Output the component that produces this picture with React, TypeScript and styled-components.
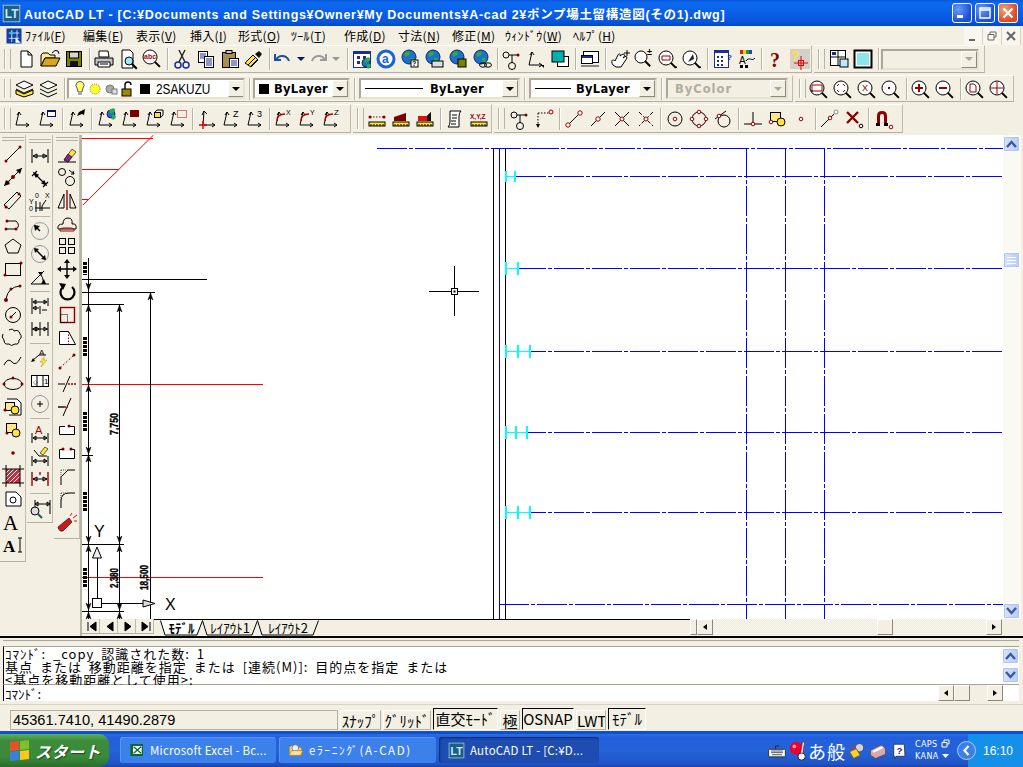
import React from "react";
import styled, { createGlobalStyle } from "styled-components";

const FACE = "#f3efe3";
const UI_FONT = `"Liberation Sans", "Noto Sans CJK JP", sans-serif`;
const CJK_FONT = `"Noto Sans CJK JP", "Liberation Sans", sans-serif`;

const GlobalStyle = createGlobalStyle`
  html, body {
    margin: 0;
    padding: 0;
    background: ${FACE};
  }
`;

/* ---------- icon helpers ---------- */

const dot = (x: number, y: number, r = 1.5) => <circle cx={x} cy={y} r={r} fill="#7a0000" />;
const ln = (d: string, c = "#000", w = 1) => <path d={d} fill="none" stroke={c} strokeWidth={w} />;
const mag = (x: number, y: number, r: number, fill = "none") => (
  <>
    <circle cx={x} cy={y} r={r} fill={fill} stroke="#000" />
    <path d={`M${x + r * 0.7} ${y + r * 0.7}l5 5`} stroke="#000" strokeWidth={2} />
  </>
);
const globe = (x: number, y: number, r = 7) => (
  <>
    <circle cx={x} cy={y} r={r} fill="#1d6fd0" stroke="#102a60" />
    <path d={`M${x - r + 2} ${y - 3}q3 -4 6 -2q0 4 -3 4q-1 3 -3 -2zM${x + 1} ${y + 1}q4 -1 4 2q-2 4 -4 2z`} fill="#2fa84a" />
  </>
);
const axis = () => ln("M8 5L5 18H18M8 5l-2 3M8 5l2 3M18 18l-3-2M18 18l-3 2");
const ruler = (x = 12) => (
  <>
    <rect x={x - 8} y={15} width={16} height={4} fill="#ffe23a" stroke="#000" />
    {ln(`M${x - 6} 17v2M${x - 3} 17v2M${x} 17v2M${x + 3} 17v2M${x + 6} 17v2`)}
  </>
);
const dimBar = (y = 16) => ln(`M4 ${y - 5}v10M20 ${y - 5}v10M5 ${y}h14M5 ${y}l3-2v4zM19 ${y}l-3-2v4z`);
const txt = (x: number, y: number, s: string, c = "#000", size = 7, weight = 400, family = "Liberation Sans, sans-serif") => (
  <text x={x} y={y} fontSize={size} fontFamily={family} fill={c} fontWeight={weight}>
    {s}
  </text>
);

const icons: Record<string, React.ReactNode> = {
  new: <path d="M7 4h7l4 4v12H7zM14 4v4h4" fill="#fff" stroke="#000" />,
  open: (
    <>
      <path d="M3 19V8l2-2h5l2 2h5v3H7z" fill="#ffe887" stroke="#000" />
      <path d="M3 19l4-8h15l-4 8z" fill="#d8a520" stroke="#000" />
      {ln("M14 6q3-4 6-2M20 4l1 3", "#000")}
    </>
  ),
  save: (
    <>
      <rect x="4.500" y="4.500" width="15" height="15" fill="#808000" stroke="#000" />
      <rect x="7.500" y="5" width="9" height="6" fill="#d8d8c0" stroke="#000" />
      <rect x="8" y="14" width="8" height="5" fill="#111" />
    </>
  ),
  print: (
    <>
      <path d="M7 4h9l1 6H7z" fill="#fff" stroke="#000" />
      <path d="M3 11h18v7H3z" fill="#c4c4c4" stroke="#000" />
      <path d="M6 15h12v5H6z" fill="#fff" stroke="#000" />
      {ln("M8 17h8")}
    </>
  ),
  preview: (
    <>
      <path d="M6 3h8l3 3v15H6z" fill="#fff" stroke="#000" />
      {mag(13, 14, 4, "#9fe8f0")}
    </>
  ),
  spell: (
    <>
      {mag(10, 10, 7, "#fff")}
      {txt(4, 12, "abc", "#b00000", 7, 700)}
    </>
  ),
  cut: (
    <>
      {ln("M9 3l6 12M15 3L9 15", "#222", 1.4)}
      <circle cx="8" cy="18" r="3" fill="none" stroke="#1a2f90" strokeWidth="1.5" />
      <circle cx="16" cy="18" r="3" fill="none" stroke="#1a2f90" strokeWidth="1.5" />
    </>
  ),
  copy: (
    <>
      <rect x="4.500" y="4.500" width="9" height="11" fill="#fff" stroke="#000" />
      {ln("M6 7h6M6 9h6M6 11h6", "#1a2f90")}
      <rect x="10.500" y="9.500" width="9" height="11" fill="#fff" stroke="#000" />
      {ln("M12 12h6M12 14h6M12 16h6M12 18h6", "#1a2f90")}
    </>
  ),
  paste: (
    <>
      <rect x="4.500" y="5.500" width="13" height="15" fill="#a88f50" stroke="#000" />
      <rect x="8" y="3.500" width="6" height="3" fill="#ccc" stroke="#000" />
      <rect x="11.500" y="11.500" width="9" height="9" fill="#fff" stroke="#000" />
      {ln("M13 14h6M13 16h6M13 18h6", "#1a2f90")}
    </>
  ),
  match: (
    <>
      <path d="M3 16l8-8 5 5-7 7z" fill="#ffe23a" stroke="#000" />
      {ln("M6 18l7-7M9 19l6-6")}
      <path d="M13 7l4-3 3 3-3 4z" fill="#111" />
    </>
  ),
  undo: ln("M5 7v6h6M6 13c3-6 11-5 13 1", "#1c4fa8", 2),
  redo: ln("M19 7v6h-6M18 13c-3-6-11-5-13 1", "#9a9a9a", 2),
  dropOn: <path d="M8 10h8l-4 4z" fill="#101060" />,
  dropOff: <path d="M8 10h8l-4 4z" fill="#9a9a9a" />,
  palette: (
    <>
      <rect x="3.500" y="4.500" width="17" height="16" fill="#fff" stroke="#1a2f90" />
      <rect x="3" y="4" width="18" height="3" fill="#1a2f90" />
      <path d="M7 9h3v3H7zM13 9h3v3h-3zM7 14h3v3H7z" fill="#1a2f90" />
      {globe(16, 16, 4)}
    </>
  ),
  assist: (
    <>
      <circle cx="12" cy="12" r="8" fill="#fff" stroke="#1564d8" strokeWidth="3" />
      {txt(8, 16, "a", "#1564d8", 12, 700)}
    </>
  ),
  webHelp: (
    <>
      {globe(11, 10)}
      <rect x="13" y="13" width="7" height="7" fill="#fff" stroke="#000" />
      {txt(14, 19, "?", "#000", 7, 700)}
    </>
  ),
  webPrint: (
    <>
      {globe(11, 10)}
      <rect x="10" y="14" width="11" height="6" fill="#ddd" stroke="#000" />
    </>
  ),
  webSave: (
    <>
      {globe(11, 10)}
      <rect x="12" y="12" width="8" height="8" fill="#808000" stroke="#000" />
    </>
  ),
  webLink: (
    <>
      {globe(11, 10)}
      <ellipse cx="13" cy="18" rx="3.500" ry="2.200" fill="none" stroke="#000" />
      <ellipse cx="18" cy="18" rx="3.500" ry="2.200" fill="none" stroke="#000" />
    </>
  ),
  snapFrom: (
    <>
      <circle cx="6" cy="8" r="3" fill="none" stroke="#000" />
      <circle cx="12" cy="19" r="3.500" fill="none" stroke="#000" />
      {ln("M9 8h8M12 8v8")}
      {dot(18, 8)}
    </>
  ),
  axisBlack: (
    <>
      {axis()}
      <path d="M17 18l3 0 0 3z" fill="#000" />
    </>
  ),
  order: (
    <>
      <rect x="9.500" y="9.500" width="11" height="10" fill="#fff" stroke="#000" />
      <rect x="4" y="4" width="12" height="11" fill="#00b0b0" stroke="#000" />
    </>
  ),
  props: (
    <>
      <rect x="5.500" y="4.500" width="15" height="11" fill="#fff" stroke="#000" />
      <rect x="3.500" y="8.500" width="11" height="8" fill="#fff" stroke="#000" />
      <rect x="4" y="9" width="10" height="2" fill="#1a2f90" />
      <path d="M3 18h18v2H3z" fill="#888" />
    </>
  ),
  pan: (
    <>
      <path d="M5 18c-3-5 0-6 2-4l3-6c1-2 3-1 2 1l3-2c2 0 2 2 0 4l3-2 1 2-6 9H8z" fill="#fff" stroke="#000" />
      {ln("M16 6h6M19 3v6")}
    </>
  ),
  zoomRT: (
    <>
      {mag(9, 10, 6, "#fff")}
      {txt(15, 8, "±", "#000", 9, 700)}
    </>
  ),
  zoomPrev: (
    <>
      {mag(10, 11, 7, "#fff")}
      <path d="M6 13V9h8M6 13h8V9" fill="none" stroke="#900" />
      <path d="M21 19v2h-2z" fill="#000" />
    </>
  ),
  zoom3d: (
    <>
      {mag(10, 11, 7, "#fff")}
      <path d="M8 15l5-8 1 5z" fill="#222" />
      <path d="M21 19v2h-2z" fill="#000" />
    </>
  ),
  table: (
    <>
      <rect x="4.500" y="3.500" width="14" height="17" fill="#fff" stroke="#1a2f90" />
      <rect x="4" y="3" width="15" height="3" fill="#1a2f90" />
      <path d="M7 9h2v2H7zM11 9h2v2h-2zM7 13h2v2H7zM11 13h2v2h-2zM7 17h2v2H7zM11 17h2v2h-2z" fill="#1a2f90" />
      {txt(17, 13, "?", "#1a2f90", 8, 700)}
    </>
  ),
  style: (
    <>
      <path d="M6 3h3v4H6z" fill="#d02020" />
      <path d="M9 3h3v4H9z" fill="#ffd000" />
      <path d="M12 3h3v4h-3z" fill="#20a030" />
      <path d="M15 3h3v4h-3z" fill="#2040d0" />
      {txt(5, 17, "A", "#000", 10, 400)}
      {ln("M12 14c3-5 6 1 9-3")}
      <rect x="6" y="18" width="3" height="3" fill="#000" />
      <rect x="11" y="18" width="3" height="3" fill="#000" />
    </>
  ),
  help: txt(6, 20, "?", "#8a0000", 20, 700, "Liberation Serif, serif"),
  helpSnap: (
    <>
      <rect x="2" y="2" width="20" height="20" fill="#d4d0c8" />
      {txt(2, 14, "?", "#ffe23a", 15, 700)}
      {ln("M6 16h14M13 9v14", "#e00000")}
      <rect x="10.500" y="13.500" width="5" height="5" fill="none" stroke="#e00000" />
    </>
  ),
  viewports: (
    <>
      <rect x="3.500" y="3.500" width="15" height="15" fill="#fff" stroke="#000" />
      {ln("M11 3v15M3 10h15")}
      <rect x="5" y="5" width="4" height="3" fill="#1a2f90" />
      <rect x="13" y="12" width="8" height="8" fill="#bfe8f8" stroke="#000" />
    </>
  ),
  viewportOne: (
    <>
      <rect x="3.500" y="3.500" width="17" height="17" fill="#fff" stroke="#000" strokeWidth="2" />
      <rect x="6" y="6" width="12" height="12" fill="#8ce8e8" />
    </>
  ),
  layerMgr: (
    <>
      <path d="M3 8l8-4 9 4-9 4z" fill="#fff" stroke="#000" />
      <path d="M3 12l8 4 9-4" fill="none" stroke="#000" />
      <path d="M3 13l8 4 9-4v4l-9 3-8-3z" fill="#ffe23a" stroke="#000" />
    </>
  ),
  layerPrev: (
    <>
      <path d="M3 8l8-4 9 4-9 4z" fill="#fff" stroke="#000" />
      <path d="M3 12l8 4 9-4M3 16l8 4 9-4" fill="none" stroke="#000" />
    </>
  ),
  ucs: axis(),
  ucsRect: (
    <>
      {axis()}
      <rect x="12.500" y="3.500" width="8" height="6" fill="#fff" stroke="#101060" />
      <rect x="12" y="3" width="9" height="2" fill="#101060" />
    </>
  ),
  ucsArrow: (
    <>
      {axis()}
      <path d="M14 5l6-3-1 6-2-1-5 2z" fill="#000" />
    </>
  ),
  ucsGlobe: (
    <>
      {axis()}
      {globe(17, 7, 4)}
    </>
  ),
  ucsFace: (
    <>
      {axis()}
      <rect x="12" y="3" width="9" height="7" fill="#7a0000" />
    </>
  ),
  ucsBox: (
    <>
      {axis()}
      <rect x="12.500" y="5.500" width="6" height="5" fill="#ffe23a" stroke="#000" />
      {ln("M13 5l2-2h6v5l-2 2")}
    </>
  ),
  ucsDots: (
    <>
      {axis()}
      <rect x="11.500" y="3.500" width="9" height="7" fill="none" stroke="#b00000" strokeDasharray="1 1" />
    </>
  ),
  ucsOrigin: (
    <>
      {ln("M9 4L8 18H20M9 4L7 8M9 4l3 3M20 18l-3-2M20 18l-3 2")}
      {ln("M4 18h8M8 14v8", "#e00000", 1.4)}
    </>
  ),
  ucsZ: (
    <>
      {axis()}
      {txt(14, 10, "Z", "#000", 9)}
    </>
  ),
  ucs3: (
    <>
      {axis()}
      {txt(14, 10, "3", "#000", 9)}
    </>
  ),
  rotX: (
    <>
      {axis()}
      {ln("M6 14q0-7 8-7", "#b00000", 1.4)}
      {txt(15, 8, "X", "#000", 7)}
    </>
  ),
  rotY: (
    <>
      {axis()}
      {ln("M6 14q0-7 8-7", "#b00000", 1.4)}
      {txt(15, 8, "Y", "#000", 7)}
    </>
  ),
  rotZ: (
    <>
      {axis()}
      {ln("M6 14q0-7 8-7", "#b00000", 1.4)}
      {txt(15, 8, "Z", "#000", 8)}
    </>
  ),
  dist: (
    <>
      <path d="M5 10h14" stroke="#900" strokeDasharray="1.500 1.500" />
      {dot(5, 10)}
      {dot(19, 10)}
      {ruler()}
    </>
  ),
  area: (
    <>
      <path d="M5 14V10l12-4v8z" fill="#7a0000" />
      {ruler()}
    </>
  ),
  massprop: (
    <>
      <path d="M5 14V9h9l4-4v9z" fill="#e01010" />
      <path d="M14 14V9l4-4v9z" fill="#111" />
      {ruler()}
    </>
  ),
  list: (
    <>
      <path d="M7 4h11q-2 2-2 5v11H5q2-2 2-5z" fill="#fff" stroke="#000" />
      {ln("M9 8h5M9 11h5M8 14h5M8 17h5")}
    </>
  ),
  idPoint: (
    <>
      {txt(3, 12, "X,Y,Z", "#900", 6.500, 700)}
      {ruler()}
    </>
  ),
  snapCorner: (
    <>
      <path d="M6 6h12" fill="none" stroke="#000" strokeDasharray="1.500 1.500" />
      <path d="M6 6v14" fill="none" stroke="#000" strokeDasharray="1.500 1.500" />
      <circle cx="19" cy="5" r="2" fill="none" stroke="#900" />
      <path d="M4 17h4l-2 4z" fill="#000" />
    </>
  ),
  snapEnd: (
    <>
      {ln("M6 18L18 6")}
      <circle cx="6" cy="18" r="2.200" fill="#fff" stroke="#900" />
      <circle cx="18" cy="6" r="2.200" fill="#fff" stroke="#900" />
    </>
  ),
  snapMid: (
    <>
      {ln("M5 19L19 5")}
      <circle cx="12" cy="12" r="2.200" fill="#fff" stroke="#900" />
    </>
  ),
  snapInt: (
    <>
      {ln("M5 5l14 14M19 5L5 19")}
      <circle cx="12" cy="12" r="2" fill="#fff" stroke="#900" />
    </>
  ),
  snapApp: (
    <>
      <path d="M5 5l14 14M19 5L5 19" fill="none" stroke="#000" strokeDasharray="4 2" />
      <circle cx="12" cy="12" r="2" fill="#fff" stroke="#900" />
    </>
  ),
  snapCen: (
    <>
      <circle cx="12" cy="12" r="7" fill="none" stroke="#000" />
      <circle cx="12" cy="12" r="1.800" fill="#fff" stroke="#900" />
    </>
  ),
  snapQuad: (
    <>
      <circle cx="12" cy="12" r="7" fill="none" stroke="#000" />
      <circle cx="12" cy="5" r="1.800" fill="#fff" stroke="#900" />
      <circle cx="12" cy="19" r="1.800" fill="#fff" stroke="#900" />
      <circle cx="5" cy="12" r="1.800" fill="#fff" stroke="#900" />
      <circle cx="19" cy="12" r="1.800" fill="#fff" stroke="#900" />
    </>
  ),
  snapTan: (
    <>
      <circle cx="13" cy="14" r="6" fill="none" stroke="#000" />
      {ln("M4 12L15 4")}
      <circle cx="8" cy="9" r="1.800" fill="#fff" stroke="#900" />
    </>
  ),
  snapPer: (
    <>
      {ln("M3 17h18M12 5v12")}
      <circle cx="12" cy="17" r="1.800" fill="#fff" stroke="#900" />
    </>
  ),
  snapIns: (
    <>
      <rect x="5.500" y="5.500" width="10" height="9" fill="#ffe887" stroke="#000" />
      <circle cx="16" cy="15" r="4" fill="#ffe23a" stroke="#000" />
      <circle cx="6" cy="15" r="1.800" fill="#fff" stroke="#900" />
    </>
  ),
  snapNode: <circle cx="12" cy="12" r="1.800" fill="#fff" stroke="#900" />,
  snapNear: (
    <>
      {ln("M3 20L16 7")}
      <circle cx="18" cy="5" r="2" fill="#fff" stroke="#888" />
      <circle cx="12" cy="11" r="1.800" fill="#fff" stroke="#900" />
    </>
  ),
  snapNone: (
    <>
      {ln("M5 5l11 11M16 5L5 16", "#8a0000", 2.400)}
      <circle cx="19" cy="19" r="1.800" fill="#fff" stroke="#000" />
    </>
  ),
  osnap: (
    <>
      <path d="M6 18V9q0-5 5-5t5 5v9h-3V9q0-2-2-2t-2 2v9z" fill="#8a0000" />
      <rect x="5" y="16" width="4" height="3" fill="#000" />
      <rect x="13" y="16" width="4" height="3" fill="#000" />
      <circle cx="20" cy="20" r="1.800" fill="#fff" stroke="#900" />
    </>
  ),
  zoomWin: (
    <>
      {mag(10, 11, 7, "#fff")}
      <path d="M5 8h10v6H5z" fill="none" stroke="#900" />
      {dot(5, 14, 1)}
    </>
  ),
  zoomDyn: (
    <>
      {mag(10, 11, 7, "#fff")}
      <path d="M6 9l2-2M14 9l-2-2M6 13l2 2M14 13l-2 2" stroke="#900" />
    </>
  ),
  zoomScale: (
    <>
      {mag(10, 11, 7, "#fff")}
      {txt(7, 14, "X", "#900", 9)}
    </>
  ),
  zoomCen: (
    <>
      {mag(10, 11, 7, "#fff")}
      {dot(10, 11, 1.200)}
    </>
  ),
  zoomIn: (
    <>
      {mag(10, 11, 7, "#fff")}
      {ln("M6 11h8M10 7v8", "#900", 2)}
    </>
  ),
  zoomOut: (
    <>
      {mag(10, 11, 7, "#fff")}
      {ln("M6 11h8", "#900", 2)}
    </>
  ),
  zoomAll: (
    <>
      {mag(10, 11, 7, "#fff")}
      <path d="M7 7h4l2 2v6H7z" fill="#fff" stroke="#900" />
    </>
  ),
  zoomExt: (
    <>
      {mag(10, 11, 7, "#fff")}
      {ln("M4 11h12M10 5v12", "#900")}
    </>
  ),
  line: (
    <>
      {ln("M5 19L19 5")}
      {dot(5, 19)}
      {dot(19, 5)}
    </>
  ),
  xline: (
    <>
      {ln("M3 21L21 3")}
      {dot(12, 12, 2)}
      {dot(7, 17)}
      <path d="M21 3l-6 2 4 4zM3 21l6-2-4-4z" fill="#000" />
    </>
  ),
  mline: (
    <>
      {ln("M3 17L16 4M8 21L20 8M16 4l4 4M3 17l5 4")}
      {dot(5, 19)}
      {dot(18, 6)}
    </>
  ),
  pline: (
    <>
      {ln("M4 18h11q5-3 0-8H6")}
      {dot(5, 18)}
      {dot(15, 18)}
      {dot(6, 10)}
    </>
  ),
  polygon: <path d="M12 5l8 6-3 8H7l-3-8z" fill="none" stroke="#000" />,
  rect: (
    <>
      <rect x="4.500" y="6.500" width="15" height="12" fill="none" stroke="#000" />
      {dot(4, 18)}
      {dot(20, 6)}
    </>
  ),
  arc: (
    <>
      {ln("M5 19Q7 7 19 6")}
      {dot(5, 20, 2)}
      {dot(10, 9)}
      {dot(19, 6)}
    </>
  ),
  circle: (
    <>
      <circle cx="12" cy="12" r="7.500" fill="none" stroke="#000" />
      {ln("M10 14l5-5", "#000")}
      {dot(10, 14)}
    </>
  ),
  cloud: (
    <path
      d="M8 4q4-2 5 1 5-2 6 3 3 3-1 6 0 5-4 4-4 3-6 0-5 1-5-4-3-3-1-6 2-6z"
      fill="none"
      stroke="#000"
    />
  ),
  spline: ln("M3 16q4-8 8-3t9-5"),
  ellipse: (
    <>
      <ellipse cx="12" cy="12" rx="9" ry="5.500" fill="none" stroke="#000" />
      {dot(3, 12)}
      {dot(21, 12)}
      {dot(12, 6)}
    </>
  ),
  insert: (
    <>
      <path d="M6 4h10l4 4v12H8" fill="#fff" stroke="#000" />
      <rect x="4.500" y="7.500" width="9" height="8" fill="#ffe887" stroke="#000" />
      <circle cx="14" cy="15" r="4" fill="#ffe23a" stroke="#000" />
      {dot(4, 15)}
    </>
  ),
  block: (
    <>
      <rect x="5.500" y="5.500" width="10" height="9" fill="#ffe887" stroke="#000" />
      <circle cx="15" cy="15" r="4" fill="#ffe23a" stroke="#000" />
      {dot(6, 15)}
    </>
  ),
  point: dot(12, 12, 1.800),
  hatch: (
    <>
      <rect x="5" y="5" width="14" height="14" fill="#c03040" />
      {ln("M5 9l4-4M5 13l8-8M5 17l12-12M8 19l11-11M12 19l7-7", "#fff")}
      {ln("M1 5h22M1 19h22M5 1v22M19 1v22")}
    </>
  ),
  region: (
    <>
      <path d="M5 5h10l5 5v9H5z" fill="#fff" stroke="#000" />
      <circle cx="12" cy="13" r="3" fill="none" stroke="#000" />
    </>
  ),
  mtext: txt(2, 20, "A", "#000", 21, 400, "Liberation Serif, serif"),
  stext: (
    <>
      {txt(2, 19, "A", "#000", 17, 700, "Liberation Serif, serif")}
      {ln("M17 5h4M19 5v14M17 19h4")}
    </>
  ),
  dimLin: ln("M4 5v14M20 5v14M5 12h14M5 12l4-2v4zM19 12l-4-2v4z"),
  dimAli: ln("M4 9L9 4M15 20l5-5M6 6l12 12M6 6l2 4 2-2zM18 18l-2-4-2 2z", "#000", 1.200),
  ordinate: (
    <>
      {txt(7, 8, "0", "#000", 7)}
      {txt(17, 8, "X", "#000", 7)}
      {txt(1, 14, "Y", "#000", 7)}
      {txt(1, 21, "0", "#000", 7)}
      {ln("M8 11v11M7 18h15M12 12v9M18 10l-4 6v5")}
    </>
  ),
  radius: (
    <>
      <circle cx="12" cy="12" r="8.500" fill="none" stroke="#999" />
      {ln("M12 12L7 7", "#000", 1.400)}
      <path d="M6 6l6 1-5 5z" fill="#000" />
    </>
  ),
  diameter: (
    <>
      <circle cx="12" cy="12" r="8.500" fill="none" stroke="#999" />
      {ln("M7 7l10 10", "#000", 1.400)}
      <path d="M6 6l5 1-4 4zM18 18l-5-1 4-4z" fill="#000" />
    </>
  ),
  angular: (
    <>
      {ln("M3 19h18M3 19L16 6")}
      {ln("M11 8q5 4 4 11", "#000")}
      <path d="M10 7l5 0-2 4zM13 19l3-5 2 5z" fill="#000" />
    </>
  ),
  baseline: ln("M4 4v16M20 4v8M12 12v8M5 8h14M5 14h6M14 16h5M5 8l3-2v4zM19 8l-3-2v4zM5 14l3-2v4z"),
  cont: ln("M4 5v14M20 5v14M12 5v14M4 12h16M5 12l3-2v4zM11 12l-3-2v4zM19 12l-3-2v4z"),
  leader: (
    <>
      {ln("M4 15l7-6h7")}
      <path d="M3 16l4-1-2-3z" fill="#000" />
      {txt(11, 9, "A", "#000", 8)}
      <path d="M16 11l-4 5 3 0-2 5 6-7h-3z" fill="#ffe23a" stroke="#a08000" strokeWidth=".4" />
    </>
  ),
  tolerance: (
    <>
      <rect x="3.500" y="6.500" width="17" height="11" fill="#fff" stroke="#000" />
      {ln("M9 6v11M15 6v11")}
      {txt(5, 15, "◇", "#000", 6)}
      {txt(16, 15, "1", "#000", 8)}
    </>
  ),
  centerMark: (
    <>
      <circle cx="12" cy="12" r="8.500" fill="none" stroke="#999" />
      {ln("M9 12h6M12 9v6")}
    </>
  ),
  dimEdit: (
    <>
      {txt(7, 13, "A", "#a00000", 11)}
      {dimBar(17)}
    </>
  ),
  dimTedit: (
    <>
      <path d="M12 9l5-6 3 2-5 6z" fill="#ffe23a" stroke="#000" strokeWidth=".6" />
      {ln("M6 6l5 6h8")}
      {dimBar(17)}
    </>
  ),
  dimUpdate: (
    <>
      {ln("M4 5v14M20 5v14", "#a00000", 1.400)}
      {ln("M5 12h14M5 12l4-2v4zM19 12l-4-2v4z")}
      {ln("M12 5v3", "#a00000", 1.400)}
    </>
  ),
  dimStyle: (
    <>
      {ln("M7 4v10M22 4v14M7 8h15M7 8l3-2v4zM22 8l-3-2v4z")}
      <circle cx="7" cy="15" r="4" fill="#ddd" stroke="#000" />
      {ln("M10 18l4 4", "#0f6050", 2)}
    </>
  ),
  erase: (
    <>
      {ln("M3 20h18")}
      <path d="M9 18l8-11 4 3-8 10z" fill="#ffe23a" stroke="#000" strokeWidth=".6" />
      <path d="M9 18l4-6 4 3-4 5z" fill="#902090" stroke="#000" strokeWidth=".6" />
    </>
  ),
  copyObj: (
    <>
      <circle cx="7" cy="7" r="3.500" fill="none" stroke="#000" />
      <circle cx="15" cy="16" r="4.500" fill="none" stroke="#000" />
      {ln("M14 5l5 4M19 9l-1-3M19 9l-3 0")}
    </>
  ),
  mirror: (
    <>
      {ln("M12 2v20", "#a00000", 1.400)}
      <path d="M9 20H3L9 6zM15 20h6L15 6z" fill="none" stroke="#000" />
    </>
  ),
  offset: (
    <>
      <path d="M3 18q-1-5 5-5 0-6 5-6t4 6q5-1 4 5z" fill="none" stroke="#000" />
      <path d="M5 20q-1-3 4-3h6q5 0 4 3z" fill="none" stroke="#a00000" />
    </>
  ),
  array: (
    <>
      <rect x="4.500" y="4.500" width="6" height="6" fill="none" stroke="#000" />
      <rect x="13.500" y="4.500" width="6" height="6" fill="none" stroke="#000" />
      <rect x="4.500" y="13.500" width="6" height="6" fill="none" stroke="#000" />
      <rect x="13.500" y="13.500" width="6" height="6" fill="none" stroke="#000" />
    </>
  ),
  move: (
    <>
      {ln("M12 3v18M3 12h18", "#000", 1.400)}
      <path d="M12 2l-3 4h6zM12 22l-3-4h6zM2 12l4-3v6zM22 12l-4-3v6z" fill="#000" />
    </>
  ),
  rotate: (
    <>
      <path d="M17 7a7 7 0 1 1-9 0" fill="none" stroke="#000" strokeWidth="2.200" />
      <path d="M4 3l7 1-3 6z" fill="#000" />
    </>
  ),
  scale: (
    <>
      <rect x="5.500" y="4.500" width="14" height="15" fill="none" stroke="#8a0000" strokeWidth="1.400" />
      <rect x="5.500" y="11.500" width="7" height="8" fill="none" stroke="#000" strokeDasharray="1 1" />
    </>
  ),
  stretch: (
    <>
      <path d="M4.500 5.500h9l7 13h-16z" fill="#fff" stroke="#000" />
      <path d="M13.500 5.500v13" stroke="#a00000" strokeDasharray="1.500 1.500" />
    </>
  ),
  lengthen: (
    <>
      <path d="M5 19L19 6" fill="none" stroke="#8a0000" strokeDasharray="2 2" />
      {dot(5, 19)}
      {dot(19, 6)}
    </>
  ),
  trim: (
    <>
      {ln("M15 4L8 20")}
      {ln("M3 12h7")}
      <path d="M13 12h8" stroke="#a00000" strokeWidth="1.400" strokeDasharray="2 1" />
    </>
  ),
  extend: (
    <>
      {ln("M16 3L8 21")}
      {ln("M3 12h6", "#000", 1.400)}
      <path d="M9 12h4" stroke="#a00000" strokeWidth="1.400" strokeDasharray="2 1" />
    </>
  ),
  break1: (
    <>
      <path d="M4.500 8.500h15v8h-15z" fill="#fff" stroke="#000" />
      <rect x="10" y="6" width="5" height="4" fill="#fff" stroke="none" />
      {dot(14, 8)}
    </>
  ),
  break2: (
    <>
      <path d="M4.500 8.500h15v9h-15z" fill="#fff" stroke="#000" />
      <rect x="8" y="6" width="8" height="4" fill={FACE} />
      {dot(8, 8)}
      {dot(16, 8)}
    </>
  ),
  chamfer: (
    <>
      {ln("M6 21V13l7-7h7")}
      <path d="M6 6v7M6 6h7" fill="none" stroke="#555" strokeDasharray="1 1" />
    </>
  ),
  fillet: (
    <>
      {ln("M6 21V14q0-8 8-8h6")}
      <path d="M6 6v7M6 6h7" fill="none" stroke="#555" strokeDasharray="1 1" />
    </>
  ),
  explode: (
    <>
      <path d="M3 17L14 8l3 4-9 9q-4 1-5-4z" fill="#d01818" stroke="#000" strokeWidth=".6" />
      {ln("M15 6l2-3M18 8l4-3M19 11h3", "#d01818")}
    </>
  ),
  keyboard: (
    <>
      <rect x="2" y="10" width="20" height="9" rx="1" fill="#fff" stroke="#222" />
      {ln("M5 12h14M5 14h14M6 16.500h12", "#333")}
      <path d="M10 10V6h5" fill="none" stroke="#222" />
    </>
  ),
  ime: (
    <>
      <circle cx="10" cy="9" r="7" fill="#e80030" />
      <circle cx="8" cy="7" r="2" fill="#ff9aa8" />
      <circle cx="16" cy="18" r="4" fill="#fff" stroke="#111" />
      <path d="M17 2l2 1-2 12-2-1z" fill="#fff" stroke="#900" strokeWidth=".6" />
    </>
  ),
  trayTools: (
    <>
      <circle cx="15" cy="8" r="5" fill="#cfd6e0" stroke="#445" />
      <path d="M3 13l8-4 5 8-8 4z" fill="#ffd020" stroke="#554" />
      <path d="M5 9l3-4 2 5z" fill="#d03030" />
    </>
  ),
  trayBox: (
    <>
      <path d="M3 11l12-6 6 4v7l-12 5-6-4z" fill="#d8a8b0" stroke="#644" />
      <path d="M5 12l12-6 2 2-12 6z" fill="#fff" />
    </>
  ),
  trayHelp: (
    <>
      <path d="M5 3h14l1 16H8l-1 3-1-3H5z" fill="#fff" stroke="#222" />
      {txt(8.500, 16, "?", "#1a1a90", 13, 700)}
    </>
  ),
  folder: (
    <>
      <path d="M2 20V8l2-2h6l2 2h8v12z" fill="#f5d27a" stroke="#a87c20" />
      <circle cx="11" cy="9" r="5" fill="#e6eef8" stroke="#666" />
      <path d="M2 20l3-7h17l-3 7z" fill="#ffe4a0" stroke="#a87c20" />
    </>
  ),
  excel: (
    <>
      <rect x="2" y="3" width="19" height="18" fill="#0a6a2a" />
      <rect x="6" y="6" width="13" height="12" fill="#fff" />
      {ln("M7 7l11 10M18 7L7 17", "#0a6a2a", 2)}
    </>
  ),
  logoLt: (
    <>
      <rect x="1.500" y="1.500" width="21" height="21" fill="#1b5f88" stroke="#b8d4e4" />
      {txt(3.500, 18, "LT", "#cfe8f8", 15, 700)}
    </>
  ),
  menuLogo: (
    <>
      <rect x="2" y="2" width="20" height="20" fill="#1040a0" />
      {ln("M5 8h14M5 15h14M9 4v16M16 4v16", "#fff")}
      <path d="M14 14l7 7h-7z" fill="#fff" />
      <rect x="7" y="6" width="4" height="4" fill="#20c8e8" />
    </>
  ),
};

const Icon = ({ name, size = 24 }: { name: string; size?: number }) => (
  <svg width={size} height={size} viewBox="0 0 24 24" style={{ flex: "none" }}>
    {icons[name]}
  </svg>
);

/* ---------- shell ---------- */

const Window = styled.div`
  width: 1023px;
  height: 767px;
  overflow: hidden;
  display: flex;
  flex-direction: column;
  background: ${FACE};
  font-family: ${UI_FONT};
  color: #000;
`;

const TitleBar = styled.div`
  height: 26px;
  flex: none;
  box-sizing: border-box;
  padding: 0 5px 0 2px;
  display: flex;
  align-items: center;
  background: linear-gradient(180deg, #0a56d8 0%, #0c6af0 12%, #0a5fe6 50%, #0654dc 85%, #0048c8 100%);
`;

const TitleText = styled.div`
  flex: 1;
  margin-left: 3px;
  color: #fff;
  font: 700 12.500px ${UI_FONT};
  letter-spacing: 0.7px;
  white-space: nowrap;
  overflow: hidden;
`;

const CaptionButton = styled.div<{ $close?: boolean }>`
  width: 20px;
  height: 20px;
  margin-left: 3px;
  box-sizing: border-box;
  border: 1px solid #fff;
  border-radius: 3px;
  display: flex;
  align-items: center;
  justify-content: center;
  background: ${(p) =>
    p.$close
      ? "radial-gradient(circle at 30% 30%, #f0a080, #dc4a20 70%)"
      : "radial-gradient(circle at 30% 30%, #6a9cf8, #1a50d8 70%)"};
`;

const MenuBar = styled.div`
  height: 19px;
  flex: none;
  display: flex;
  align-items: center;
`;

const MenuLogo = styled.div`
  width: 25px;
  flex: none;
  display: flex;
  justify-content: center;
  padding-left: 2px;
  box-sizing: border-box;
`;

const MenuItem = styled.span<{ $w: number }>`
  width: ${(p) => p.$w}px;
  flex: none;
  font: 400 12px ${CJK_FONT};
  letter-spacing: 0.3px;
  white-space: nowrap;
`;

const MdiControls = styled.div`
  margin-left: auto;
  display: flex;
  margin-right: 2px;
`;

const MdiButton = styled.div`
  width: 18px;
  height: 18px;
  background: #f8f6ee;
  border-right: 1px solid #d8d4c4;
  display: flex;
  align-items: center;
  justify-content: center;
  color: #666;
`;

const ToolRow = styled.div<{ $h: number }>`
  height: ${(p) => p.$h}px;
  flex: none;
  display: flex;
  gap: 2px;
  margin-bottom: 2px;
`;

const ToolPanel = styled.div<{ $w: number; $pad: number }>`
  width: ${(p) => p.$w}px;
  box-sizing: border-box;
  flex: none;
  position: relative;
  padding-left: ${(p) => p.$pad}px;
  display: flex;
  align-items: center;
  background: ${FACE};
  border-top: 1px solid #fff;
  border-right: 1px solid #c0bcac;
  border-bottom: 1px solid #b4b0a0;
`;

const Grip = styled.span`
  position: absolute;
  left: 4px;
  top: 3px;
  bottom: 3px;
  width: 5px;
  border-left: 1px solid #b8b4a4;
  border-right: 1px solid #b8b4a4;
  box-shadow: inset 1px 0 0 #fff;
`;

const ToolButton = styled.span<{ $w?: number }>`
  width: ${(p) => p.$w ?? 24}px;
  height: 24px;
  flex: none;
  display: flex;
  align-items: center;
  justify-content: center;
`;

const ToolSep = styled.span<{ $w?: number }>`
  width: ${(p) => p.$w ?? 6}px;
  height: 22px;
  flex: none;
  display: flex;
  justify-content: center;
  &::before {
    content: "";
    width: 1px;
    background: #b8b4a4;
    box-shadow: 1px 0 0 #fff;
  }
`;

const Combo = styled.div<{ $w: number; $off?: boolean }>`
  width: ${(p) => p.$w}px;
  height: 21px;
  flex: none;
  box-sizing: border-box;
  border: 2px solid #aaa698;
  border-right-color: #e6e2d4;
  border-bottom-color: #e6e2d4;
  background: ${(p) => (p.$off ? FACE : "#fff")};
  display: flex;
  align-items: center;
  overflow: hidden;
`;

const ComboText = styled.div<{ $off?: boolean }>`
  flex: 1;
  display: flex;
  align-items: center;
  gap: 5px;
  padding-left: ${(p) => (p.$off ? 7 : 4)}px;
  font: 700 11.500px "DejaVu Sans", ${UI_FONT};
  color: ${(p) => (p.$off ? "#b0ad9f" : "#000")};
  letter-spacing: ${(p) => (p.$off ? 1 : 0.3)}px;
  white-space: nowrap;
`;

const LayerName = styled.span`
  font: 400 15.500px ${UI_FONT};
  letter-spacing: 0;
  margin-left: 1px;
  display: inline-block;
  transform: scaleX(0.76);
  transform-origin: left center;
`;

const Swatch = styled.span`
  width: 10px;
  height: 10px;
  background: #000;
  flex: none;
`;

const LineSample = styled.span<{ $w: number }>`
  width: ${(p) => p.$w}px;
  height: 1px;
  background: #000;
  flex: none;
`;

const ComboArrow = styled.div<{ $off?: boolean }>`
  width: 16px;
  height: 17px;
  flex: none;
  box-sizing: border-box;
  background: ${FACE};
  border: 1px solid;
  border-color: #fff #8c887a #8c887a #fff;
  display: flex;
  align-items: center;
  justify-content: center;
  &::before {
    content: "";
    border-left: 4px solid transparent;
    border-right: 4px solid transparent;
    border-top: 4px solid ${(p) => (p.$off ? "#aaa698" : "#000")};
  }
`;

/* ---------- main area ---------- */

const Main = styled.div`
  height: 501px;
  flex: none;
  display: flex;
  border-bottom: 2px solid #000;
`;

const Dock = styled.div`
  width: 82px;
  flex: none;
  display: flex;
  gap: 1px;
  align-items: flex-start;
  box-sizing: border-box;
  padding-right: 1px;
  border-right: 2px solid #b8b4a4;
`;

const DockColumn = styled.div<{ $h: number; $top?: number }>`
  width: 26px;
  height: ${(p) => p.$h}px;
  flex: none;
  box-sizing: border-box;
  padding-top: ${(p) => p.$top ?? 0}px;
  display: flex;
  flex-direction: column;
  align-items: center;
  border-right: 1px solid #c0bcac;
  border-bottom: 1px solid #b4b0a0;
  background: ${FACE};
`;

const DockGrip = styled.div`
  width: 22px;
  height: 4px;
  margin: 2px 0 1px;
  box-sizing: border-box;
  flex: none;
  border-top: 1px solid #b8b4a4;
  border-bottom: 1px solid #b8b4a4;
`;

const DockButton = styled.span`
  width: 24px;
  height: 23px;
  flex: none;
  display: flex;
  align-items: center;
  justify-content: center;
`;

const DockSep = styled.span`
  width: 20px;
  height: 6px;
  flex: none;
  display: flex;
  align-items: center;
  &::before {
    content: "";
    width: 100%;
    height: 1px;
    background: #b8b4a4;
  }
`;

const DrawArea = styled.div`
  flex: 1;
  min-width: 0;
  display: flex;
  flex-direction: column;
`;

const CanvasRow = styled.div`
  height: 484px;
  flex: none;
  display: flex;
`;

const Canvas = styled.svg`
  width: 921px;
  height: 484px;
  flex: none;
  display: block;
  background: #fff;
`;

const VScroll = styled.div`
  width: 18px;
  flex: none;
  display: flex;
  flex-direction: column;
  justify-content: space-between;
  padding-top: 1px;
  box-sizing: border-box;
  position: relative;
  background: #fbfaf2;
`;

const XpButton = styled.div`
  width: 17px;
  height: 16px;
  box-sizing: border-box;
  border: 1px solid #fff;
  border-radius: 2px;
  outline: 1px solid #b0c4f0;
  outline-offset: -2px;
  background: linear-gradient(90deg, #d8e4fc, #b8ccf8);
  display: flex;
  align-items: center;
  justify-content: center;
`;

const VThumb = styled(XpButton)`
  position: absolute;
  top: 117px;
  left: 0;
`;

const TabRow = styled.div`
  flex: 1;
  display: flex;
  align-items: flex-start;
  background: ${FACE};
`;

const TabNav = styled.div`
  display: flex;
  flex: none;
`;

const TabNavButton = styled.div`
  width: 18px;
  height: 15px;
  box-sizing: border-box;
  border-right: 1px solid #c0bcac;
  border-bottom: 1px solid #b4b0a0;
  display: flex;
  align-items: center;
  justify-content: center;
`;

const Tabs = styled.div`
  width: 536px;
  flex: none;
  display: flex;
  border-top: 1px solid #000;
  box-sizing: border-box;
  padding-left: 6px;
  height: 17px;
`;

const Tab = styled.div<{ $w: number; $active?: boolean }>`
  width: ${(p) => p.$w}px;
  height: 16px;
  flex: none;
  position: relative;
  text-align: center;
  font: ${(p) => (p.$active ? 700 : 400)} 13px ${CJK_FONT};
  line-height: 15px;
  margin-right: -1px;
  z-index: ${(p) => (p.$active ? 2 : 1)};
  & > span {
    position: relative;
  }
`;

const TabShape = styled.svg`
  position: absolute;
  inset: 0;
  width: 100%;
  height: 100%;
`;

const HScrollTrack = styled.div<{ $w: number }>`
  width: ${(p) => p.$w}px;
  height: 17px;
  flex: none;
  display: flex;
  background: repeating-conic-gradient(#f8f5ec 0 25%, #f0ecdf 0 50%) 0 0 / 2px 2px;
`;

const ClassicButton = styled.div<{ $dir?: "left" | "right" | "none"; $w?: number }>`
  width: ${(p) => p.$w ?? 16}px;
  height: 16px;
  flex: none;
  box-sizing: border-box;
  background: ${FACE};
  border: 1px solid;
  border-color: #fff #8c887a #8c887a #fff;
  display: flex;
  align-items: center;
  justify-content: center;
  &::before {
    content: "";
    display: ${(p) => (p.$dir === "none" || !p.$dir ? "none" : "block")};
    border-top: 3px solid transparent;
    border-bottom: 3px solid transparent;
    ${(p) => (p.$dir === "left" ? "border-right: 4px solid #000;" : "border-left: 4px solid #000;")}
  }
`;

const TrackFill = styled.div<{ $w: number }>`
  width: ${(p) => p.$w}px;
  flex: none;
`;

/* ---------- command window ---------- */

const CommandPanel = styled.div`
  height: 67px;
  flex: none;
  box-sizing: border-box;
  padding: 2px 4px 4px 3px;
  display: flex;
  flex-direction: column;
  border-bottom: 1px solid #d8d4c4;
`;

const PanelRule = styled.div`
  height: 1px;
  flex: none;
  margin-bottom: 5px;
  background: #aaa698;
`;

const History = styled.div`
  height: 39px;
  flex: none;
  display: flex;
  box-sizing: border-box;
  border-left: 1px solid #000;
  border-top: 1px solid #a8a494;
  border-bottom: 1px solid #a8a494;
  background: #fff;
`;

const HistoryLines = styled.div`
  flex: 1;
  padding-left: 1px;
  font: 400 13px/13px ${CJK_FONT};
  letter-spacing: 1px;
  word-spacing: 3px;
  white-space: nowrap;
`;

const HistoryLine = styled.div`
  height: 13px;
`;

const HistoryScroll = styled.div`
  width: 17px;
  flex: none;
  display: flex;
  flex-direction: column;
  justify-content: space-between;
  padding: 1px 0;
  box-sizing: border-box;
  background: #fbfaf2;
`;

const InputRow = styled.div`
  height: 16px;
  flex: none;
  display: flex;
  align-items: center;
  background: #fff;
  border-left: 1px solid #000;
  padding: 0 16px 0 1px;
  font: 400 13px/15px ${CJK_FONT};
`;

const InputScroll = styled.div`
  margin-left: auto;
  width: 65px;
  display: flex;
  background: ${FACE};
`;

const StatusBar = styled.div`
  height: 26px;
  flex: none;
  display: flex;
  align-items: flex-end;
  box-sizing: border-box;
  padding: 0 0 1px 10px;
  gap: 2px;
`;

const Coords = styled.div`
  width: 328px;
  height: 20px;
  box-sizing: border-box;
  flex: none;
  border: 1px solid #b4b0a0;
  font: 400 14.600px/18px ${UI_FONT};
  padding-left: 2px;
`;

const StatusButton = styled.div<{ $w: number; $on?: boolean }>`
  width: ${(p) => p.$w}px;
  height: ${(p) => (p.$on ? 22 : 20)}px;
  flex: none;
  box-sizing: border-box;
  border: 1px solid;
  border-color: ${(p) => (p.$on ? "#000 #fff #fff #000" : "#fff #b4b0a0 #b4b0a0 #fff")};
  font: 400 15px/19px ${CJK_FONT};
  text-align: center;
  white-space: nowrap;
  overflow: hidden;
`;

/* ---------- taskbar ---------- */

const Taskbar = styled.div`
  height: 36px;
  flex: none;
  display: flex;
  align-items: stretch;
  border-top: 3px solid #0a50d8;
  box-sizing: border-box;
  background: linear-gradient(180deg, #2a6ee8 0%, #245edb 10%, #2463d8 50%, #1f54c8 90%, #1a44b0 100%);
`;

const StartButton = styled.div`
  width: 109px;
  flex: none;
  box-sizing: border-box;
  display: flex;
  align-items: center;
  gap: 6px;
  padding-left: 10px;
  border-radius: 0 10px 10px 0;
  background: linear-gradient(180deg, #5eb05e 0%, #3c8c3c 20%, #3a8a3a 70%, #2a6e2a 100%);
  color: #fff;
  font: italic 700 16px ${CJK_FONT};
  letter-spacing: 0.5px;
  text-shadow: 1px 1px 1px #1a4a1a;
`;

const Flag = styled.div`
  width: 19px;
  height: 19px;
  flex: none;
  display: grid;
  grid-template-columns: 1fr 1fr;
  gap: 1px;
  transform: skewY(-6deg);
`;

const FlagPane = styled.span<{ $c: string }>`
  background: ${(p) => p.$c};
`;

const TaskButtons = styled.div`
  display: flex;
  gap: 3px;
  margin-left: 11px;
  padding: 3px 0 4px;
`;

const TaskButton = styled.div<{ $w: number; $active?: boolean }>`
  width: ${(p) => p.$w}px;
  flex: none;
  box-sizing: border-box;
  border-radius: 3px;
  display: flex;
  align-items: center;
  gap: 5px;
  padding-left: 9px;
  color: #fff;
  font: 400 11.500px ${CJK_FONT};
  letter-spacing: 0.2px;
  white-space: nowrap;
  background: ${(p) => (p.$active ? "#1e4cb0" : "#3c80ec")};
  box-shadow: ${(p) => (p.$active ? "inset 1px 1px 2px #102a70" : "inset 1px 1px 0 #5a96f4")};
`;

const WideLabel = styled.span`
  letter-spacing: 1.600px;
`;

const Tray = styled.div`
  margin-left: auto;
  display: flex;
  align-items: center;
  color: #fff;
`;

const TrayGlyph = styled.span`
  font: 400 18px ${CJK_FONT};
  width: 18px;
  text-align: center;
  margin-right: 1px;
`;

const TrayIcon = styled.span`
  width: 21px;
  height: 24px;
  flex: none;
  display: flex;
  align-items: center;
  justify-content: center;
`;

const KeyState = styled.div`
  margin: 0 7px 0 6px;
  width: 35px;
  display: flex;
  flex-direction: column;
  gap: 1px;
  font: 400 8px/11px "DejaVu Sans", sans-serif;
  letter-spacing: 0.4px;
`;

const KeyLine = styled.div`
  display: flex;
  justify-content: space-between;
`;

const Chevron = styled.div`
  width: 19px;
  height: 19px;
  flex: none;
  border-radius: 50%;
  background: #3a80e8;
  border: 1px solid #a8d0ff;
  box-sizing: border-box;
  display: flex;
  align-items: center;
  justify-content: center;
  margin-right: -8px;
  position: relative;
  z-index: 1;
`;

const Clock = styled.div`
  width: 55px;
  flex: none;
  align-self: stretch;
  background: #1590ea;
  font: 400 12px ${UI_FONT};
  display: flex;
  align-items: center;
  box-sizing: border-box;
  padding-left: 15px;
`;

/* ---------- data ---------- */

type Item = string | number;

const row1a: Item[] = [
  "new", "open", "save", 6, "print", "preview", "spell", 6, "cut", "copy", "paste", "match", 6,
];
const row1b: Item[] = [
  "palette", "assist", "webHelp", "webPrint", "webSave", "webLink", 6, "snapFrom", "axisBlack", "order", 6,
  "props", 6, "pan", "zoomRT", "zoomPrev", "zoom3d", 6, "table", "style", 6, "help", "helpSnap",
];
const row3a: Item[] = [
  "ucs", "ucsRect", 6, "ucsArrow", 5, "ucsGlobe", "ucsFace", "ucsBox", "ucsDots", 5, "ucsOrigin", "ucsZ", "ucs3", 4,
  "rotX", "rotY", "rotZ",
];
const row3c: Item[] = [
  "snapFrom", "snapCorner", 6, "snapEnd", "snapMid", "snapInt", "snapApp", 5, "snapCen", "snapQuad", "snapTan", 6,
  "snapPer", "snapIns", "snapNode", 5, "snapNear", "snapNone", 5, "osnap",
];
const zoomRow: Item[] = ["zoomWin", "zoomDyn", "zoomScale", "zoomCen", 6, "zoomIn", "zoomOut", 6, "zoomAll", "zoomExt"];

const dockCol1 = [
  "line", "xline", "mline", "pline", "polygon", "rect", "arc", "circle", "cloud", "spline", "ellipse",
  "insert", "block", "point", "hatch", "region", "mtext", "stext",
];
const dockCol2 = [
  "dimLin", "dimAli", "ordinate", "|", "radius", "diameter", "angular", "|", "baseline", "cont", "|",
  "leader", "tolerance", "centerMark", "|", "dimEdit", "dimTedit", "dimUpdate", "|", "dimStyle",
];
const dockCol3 = [
  "erase", "copyObj", "mirror", "offset", "array", "move", "rotate", "scale", "stretch", "lengthen",
  "trim", "extend", "break1", "break2", "chamfer", "fillet", "explode",
];

const menus: [string, string, number][] = [
  ["ﾌｧｲﾙ", "F", 58],
  ["編集", "E", 53],
  ["表示", "V", 54],
  ["挿入", "I", 48],
  ["形式", "O", 53],
  ["ﾂｰﾙ", "T", 53],
  ["作成", "D", 54],
  ["寸法", "N", 54],
  ["修正", "M", 53],
  ["ｳｨﾝﾄﾞｳ", "W", 68],
  ["ﾍﾙﾌﾟ", "H", 60],
];

const horizontals = [176, 268, 351, 432, 512];
const verticals = [746, 785, 824];
const ticks: [number, number[], number][] = [
  [176, [506, 515], 5],
  [268, [506, 518], 6],
  [351, [506, 518, 530], 6],
  [432, [506, 516, 527], 6],
  [512, [506, 518, 530], 6],
];
const dimArrows: [number, number, boolean][] = [
  [88, 286, false],
  [88, 309, true],
  [88, 380, false],
  [88, 389, true],
  [88, 450, false],
  [88, 459, true],
  [88, 539, false],
  [88, 549, true],
  [88, 606, false],
  [88, 616, true],
  [119, 309, true],
  [119, 539, false],
  [119, 549, true],
  [119, 606, false],
  [119, 616, true],
  [150, 297, true],
];
const blobs: [number, number, number][] = [
  [85, 262, 13],
  [85, 337, 20],
  [85, 412, 20],
  [85, 492, 20],
  [85, 568, 20],
];
const dimLabels: [number, number, number, string][] = [
  [118, 435, 22, "7,750"],
  [118, 588, 20, "2,380"],
  [148, 590, 25, "18,500"],
];

const Items = ({ items }: { items: Item[] }) => (
  <>
    {items.map((it, i) =>
      typeof it === "number" ? (
        <ToolSep key={i} $w={it} />
      ) : (
        <ToolButton key={i}>
          <Icon name={it} />
        </ToolButton>
      ),
    )}
  </>
);

const DockIcons = ({ items }: { items: string[] }) => (
  <>
    <DockGrip />
    {items.map((it, i) =>
      it === "|" ? (
        <DockSep key={i} />
      ) : (
        <DockButton key={i}>
          <Icon name={it} />
        </DockButton>
      ),
    )}
  </>
);

const ChevronIcon = ({ up }: { up?: boolean }) => (
  <svg width="11" height="8" viewBox="0 0 11 8">
    <path d={up ? "M1 7l4.500-5 4.500 5" : "M1 1l4.500 5 4.500-5"} fill="none" stroke="#3b5a98" strokeWidth="2.400" />
  </svg>
);

const Drawing = () => (
  <Canvas viewBox="82 135 921 484">
    <g stroke="#ff0000" strokeWidth="1" fill="none">
      <path d="M82 138.500H153M82 169.500H119M82 199.500H88M153.500 135L83 205M82 384.500H263M82 577.500H263" />
    </g>
    <g stroke="#000" strokeWidth="1" fill="none">
      <path d="M82 279.500H207M82 292.500H155M82 304.500H124M82 455.500H93M82 544.500H124M82 611.500H124" />
      <path d="M88.500 258V619M119.500 304V619M150.500 292V619" />
    </g>
    {dimArrows.map(([x, y, up], i) => (
      <path
        key={i}
        d={up ? `M${x + 0.5} ${y - 4}L${x + 3} ${y + 3}L${x + 0.5} ${y + 1}L${x - 2} ${y + 3}z` : `M${x + 0.5} ${y + 4}L${x + 3} ${y - 3}L${x + 0.5} ${y - 1}L${x - 2} ${y - 3}z`}
        fill="#000"
        stroke="#000"
        strokeWidth="0.5"
      />
    ))}
    {blobs.map(([x, y, h], i) => (
      <line key={i} x1={x} y1={y} x2={x} y2={y + h} stroke="#000" strokeWidth="4" strokeDasharray="3 1" />
    ))}
    {dimLabels.map(([x, y, len, label]) => (
      <text
        key={label}
        transform={`translate(${x} ${y}) rotate(-90)`}
        fontFamily="Liberation Sans, sans-serif"
        fontSize="11"
        fontWeight="700"
        stroke="#000"
        strokeWidth="0.4"
        textLength={len}
        lengthAdjust="spacingAndGlyphs"
      >
        {label}
      </text>
    ))}

    <g stroke="#000" fill="none">
      <path d="M97.500 598V558M101 603.500H143" />
      <rect x="92.500" y="598.500" width="9" height="9" fill="#fff" />
      <path d="M97 547l-4.500 11h9z" fill="#eee" />
      <path d="M143 600l12 3.500-12 3.500z" fill="#ddd" />
    </g>
    <text x="94" y="537" fontFamily="Liberation Sans, sans-serif" fontSize="16" fill="#000">Y</text>
    <text x="165" y="610" fontFamily="Liberation Sans, sans-serif" fontSize="16" fill="#000">X</text>

    <path d="M493.500 148V619M505.500 148V619" stroke="#000" fill="none" />
    <path d="M499.500 148V619" stroke="#0000ff" fill="none" />
    <g stroke="#0000ff" fill="none" strokeDasharray="30 2 4 2">
      <path d="M377 148.500H1003M499 604.500H1003" />
      {verticals.map((x) => (
        <path key={x} d={`M${x + 0.5} 148V619`} />
      ))}
      {horizontals.map((y) => (
        <path key={y} d={`M516 ${y + 0.5}H1003`} />
      ))}
    </g>
    <g stroke="#00ffff" fill="none">
      {ticks.map(([y, xs, h]) => (
        <g key={y}>
          <path d={`M${xs[0]} ${y + 0.5}H${xs[xs.length - 1]}`} />
          {xs.map((x) => (
            <path key={x} d={`M${x} ${y - h}V${y + h + 1}`} strokeWidth="2" />
          ))}
        </g>
      ))}
    </g>

    <path d="M429 291.500H451M457 291.500H479M454.500 266V288M454.500 294V316" stroke="#000" fill="none" />
    <rect x="451.500" y="288.500" width="6" height="6" fill="none" stroke="#000" />
    <rect x="453.500" y="290.500" width="2" height="2" fill="#000" />
  </Canvas>
);

const tabSlant = (w: number) => `M0.500 0.500L5 15H${w - 6}L${w - 0.5} 0.500`;

const App: React.FC = () => (
  <Window>
    <GlobalStyle />
    <TitleBar>
      <Icon name="logoLt" size={19} />
      <TitleText>AutoCAD LT - [C:¥Documents and Settings¥Owner¥My Documents¥A-cad 2¥ポンプ場土留構造図(その1).dwg]</TitleText>
      <CaptionButton>
        <svg width="12" height="12" viewBox="0 0 12 12">
          <rect x="1" y="8" width="6" height="3" fill="#fff" />
        </svg>
      </CaptionButton>
      <CaptionButton>
        <svg width="12" height="12" viewBox="0 0 12 12">
          <path d="M1 1h10v10H1z M1 3h10" fill="none" stroke="#fff" strokeWidth="1.400" />
        </svg>
      </CaptionButton>
      <CaptionButton $close>
        <svg width="12" height="12" viewBox="0 0 12 12">
          <path d="M1.500 1.500l9 9M10.500 1.500l-9 9" stroke="#fff" strokeWidth="2.200" />
        </svg>
      </CaptionButton>
    </TitleBar>

    <MenuBar>
      <MenuLogo>
        <Icon name="menuLogo" size={18} />
      </MenuLogo>
      {menus.map(([label, key, w]) => (
        <MenuItem key={key} $w={w}>
          {label}(<u>{key}</u>)
        </MenuItem>
      ))}
      <MdiControls>
        <MdiButton>
          <svg width="10" height="10" viewBox="0 0 10 10">
            <rect x="1" y="8" width="6" height="2" fill="#666" />
          </svg>
        </MdiButton>
        <MdiButton>
          <svg width="10" height="10" viewBox="0 0 10 10">
            <path d="M3 3V1h6v5H7M1 3.500h6v5.500H1z" fill="none" stroke="#666" />
          </svg>
        </MdiButton>
        <MdiButton>
          <svg width="10" height="10" viewBox="0 0 10 10">
            <path d="M1 1l8 8M9 1L1 9" stroke="#666" strokeWidth="2" />
          </svg>
        </MdiButton>
      </MdiControls>
    </MenuBar>

    <ToolRow $h={28}>
      <ToolPanel $w={812} $pad={14}>
        <Grip />
        <Items items={row1a} />
        <ToolButton $w={20}>
          <Icon name="undo" />
        </ToolButton>
        <ToolButton $w={18}>
          <Icon name="dropOn" />
        </ToolButton>
        <ToolButton $w={18}>
          <Icon name="redo" />
        </ToolButton>
        <ToolButton $w={16}>
          <Icon name="dropOff" />
        </ToolButton>
        <ToolSep $w={6} />
        <Items items={row1b} />
      </ToolPanel>
      <ToolPanel $w={171} $pad={13}>
        <Grip />
        <Items items={["viewports", "viewportOne", 6]} />
        <Combo $w={98} $off>
          <ComboText />
          <ComboArrow $off />
        </Combo>
      </ToolPanel>
    </ToolRow>

    <ToolRow $h={27}>
      <ToolPanel $w={793} $pad={13}>
        <Grip />
        <Items items={["layerMgr", "layerPrev", 6]} />
        <Combo $w={178}>
          <ComboText>
            <svg width="62" height="16" viewBox="0 0 62 16" style={{ flex: "none" }}>
              <path d="M4 7a4 4 0 1 1 6 0l-1 4H5z" fill="#ffff60" stroke="#555" />
              <path d="M5 12h4v2H5z" fill="#aaa" />
              <circle cx="22" cy="8" r="5" fill="#ffff30" stroke="#8a7a00" strokeDasharray="1 1" />
              <circle cx="37" cy="8" r="4" fill="#aaa" stroke="#777" />
              <rect x="39" y="8" width="5" height="5" fill="#ddd" stroke="#777" />
              <rect x="49" y="8" width="9" height="7" fill="#a08800" stroke="#000" />
              <path d="M52 8V4q0-3 3-3t3 3" fill="none" stroke="#000" strokeWidth="1.400" />
            </svg>
            <Swatch />
            <LayerName>2SAKUZU</LayerName>
          </ComboText>
          <ComboArrow />
        </Combo>
        <ToolSep $w={8} />
        <Combo $w={97}>
          <ComboText>
            <Swatch />
            ByLayer
          </ComboText>
          <ComboArrow />
        </Combo>
        <ToolSep $w={9} />
        <Combo $w={161}>
          <ComboText>
            <LineSample $w={58} />
            <span style={{ marginLeft: 2 }}>ByLayer</span>
          </ComboText>
          <ComboArrow />
        </Combo>
        <ToolSep $w={9} />
        <Combo $w={128}>
          <ComboText>
            <LineSample $w={36} />
            ByLayer
          </ComboText>
          <ComboArrow />
        </Combo>
        <ToolSep $w={9} />
        <Combo $w={122} $off>
          <ComboText $off>ByColor</ComboText>
          <ComboArrow $off />
        </Combo>
      </ToolPanel>
      <ToolPanel $w={219} $pad={12}>
        <Grip />
        <Items items={zoomRow} />
      </ToolPanel>
    </ToolRow>

    <ToolRow $h={29}>
      <ToolPanel $w={351} $pad={11}>
        <Grip />
        <Items items={row3a} />
      </ToolPanel>
      <ToolPanel $w={139} $pad={12}>
        <Grip />
        <Items items={["dist", "area", "massprop", 6, "list", "idPoint"]} />
      </ToolPanel>
      <ToolPanel $w={409} $pad={14}>
        <Grip />
        <Items items={row3c} />
      </ToolPanel>
    </ToolRow>

    <Main>
      <Dock>
        <DockColumn $h={427}>
          <DockIcons items={dockCol1} />
        </DockColumn>
        <DockColumn $h={388} $top={2}>
          <DockIcons items={dockCol2} />
        </DockColumn>
        <DockColumn $h={404}>
          <DockIcons items={dockCol3} />
        </DockColumn>
      </Dock>

      <DrawArea>
        <CanvasRow>
          <Drawing />
          <VScroll>
            <XpButton>
              <ChevronIcon up />
            </XpButton>
            <VThumb>
              <svg width="9" height="9" viewBox="0 0 9 9">
                <path d="M0 1.500h9M0 4.500h9M0 7.500h9" stroke="#fff" />
              </svg>
            </VThumb>
            <XpButton>
              <ChevronIcon />
            </XpButton>
          </VScroll>
        </CanvasRow>
        <TabRow>
          <TabNav>
            {["M4 2v9M12 2L6 6.500 12 11z", "M11 2L5 6.500 11 11z", "M5 2l6 4.500L5 11z", "M12 2v9M4 2l6 4.500L4 11z"].map((d) => (
              <TabNavButton key={d}>
                <svg width="14" height="13" viewBox="0 0 14 13">
                  <path d={d} fill="#000" stroke="#000" />
                </svg>
              </TabNavButton>
            ))}
          </TabNav>
          <Tabs>
            <Tab $w={43} $active>
              <TabShape viewBox="0 0 43 16" preserveAspectRatio="none">
                <path d={tabSlant(43)} fill="#fff" stroke="#000" />
              </TabShape>
              <span>ﾓﾃﾞﾙ</span>
            </Tab>
            <Tab $w={56}>
              <TabShape viewBox="0 0 56 16" preserveAspectRatio="none">
                <path d={tabSlant(56)} fill={FACE} stroke="#000" />
              </TabShape>
              <span>ﾚｲｱｳﾄ1</span>
            </Tab>
            <Tab $w={62}>
              <TabShape viewBox="0 0 62 16" preserveAspectRatio="none">
                <path d={tabSlant(62)} fill={FACE} stroke="#000" />
              </TabShape>
              <span>ﾚｲｱｳﾄ2</span>
            </Tab>
          </Tabs>
          <HScrollTrack $w={313}>
            <ClassicButton $w={7} $dir="none" />
            <ClassicButton $dir="left" />
            <TrackFill $w={164} />
            <ClassicButton $dir="none" />
            <TrackFill $w={93} />
            <ClassicButton $dir="right" />
          </HScrollTrack>
        </TabRow>
      </DrawArea>
    </Main>

    <CommandPanel>
      <PanelRule />
      <History>
        <HistoryLines>
          <HistoryLine>ｺﾏﾝﾄﾞ: _copy 認識された数: 1</HistoryLine>
          <HistoryLine>基点 または 移動距離を指定 または [連続(M)]: 目的点を指定 または</HistoryLine>
          <HistoryLine>&lt;基点を移動距離として使用&gt;:</HistoryLine>
        </HistoryLines>
        <HistoryScroll>
          <XpButton>
            <ChevronIcon up />
          </XpButton>
          <XpButton>
            <ChevronIcon />
          </XpButton>
        </HistoryScroll>
      </History>
      <InputRow>
        ｺﾏﾝﾄﾞ:
        <InputScroll>
          <ClassicButton $dir="left" />
          <ClassicButton $dir="none" />
          <TrackFill $w={17} />
          <ClassicButton $dir="right" />
        </InputScroll>
      </InputRow>
    </CommandPanel>

    <StatusBar>
      <Coords>45361.7410, 41490.2879</Coords>
      <StatusButton $w={41}>ｽﾅｯﾌﾟ</StatusButton>
      <StatusButton $w={48}>ｸﾞﾘｯﾄﾞ</StatusButton>
      <StatusButton $w={65} $on>
        直交ﾓｰﾄﾞ
      </StatusButton>
      <StatusButton $w={20}>極</StatusButton>
      <StatusButton $w={52} $on>
        OSNAP
      </StatusButton>
      <StatusButton $w={30}>LWT</StatusButton>
      <StatusButton $w={38} $on>
        ﾓﾃﾞﾙ
      </StatusButton>
    </StatusBar>

    <Taskbar>
      <StartButton>
        <Flag>
          <FlagPane $c="#e8502a" />
          <FlagPane $c="#7cc02a" />
          <FlagPane $c="#3a80e0" />
          <FlagPane $c="#f8c81e" />
        </Flag>
        スタート
      </StartButton>
      <TaskButtons>
        <TaskButton $w={156}>
          <Icon name="excel" size={16} />
          Microsoft Excel - Bc...
        </TaskButton>
        <TaskButton $w={157}>
          <Icon name="folder" size={16} />
          <WideLabel>eﾗｰﾆﾝｸﾞ(A-CAD)</WideLabel>
        </TaskButton>
        <TaskButton $w={160} $active>
          <Icon name="logoLt" size={17} />
          AutoCAD LT - [C:¥D...
        </TaskButton>
      </TaskButtons>
      <Tray>
        <TrayIcon>
          <Icon name="keyboard" size={20} />
        </TrayIcon>
        <TrayIcon>
          <Icon name="ime" size={22} />
        </TrayIcon>
        <TrayGlyph>あ</TrayGlyph>
        <TrayGlyph>般</TrayGlyph>
        <TrayIcon>
          <Icon name="trayTools" size={20} />
        </TrayIcon>
        <TrayIcon>
          <Icon name="trayBox" size={20} />
        </TrayIcon>
        <TrayIcon>
          <Icon name="trayHelp" size={18} />
        </TrayIcon>
        <KeyState>
          <KeyLine>
            CAPS
            <svg width="9" height="9" viewBox="0 0 9 9">
              <path d="M3 3V1h5v4H6M1 3.500h5v4.500H1z" fill="none" stroke="#fff" />
            </svg>
          </KeyLine>
          <KeyLine>
            KANA
            <svg width="9" height="9" viewBox="0 0 9 9">
              <path d="M1 3h7L4.500 7z" fill="#fff" />
            </svg>
          </KeyLine>
        </KeyState>
        <Chevron>
          <svg width="9" height="11" viewBox="0 0 9 11">
            <path d="M6.500 1l-4 4.500 4 4.500" fill="none" stroke="#fff" strokeWidth="2.200" />
          </svg>
        </Chevron>
        <Clock>16:10</Clock>
      </Tray>
    </Taskbar>
  </Window>
);

export default App;
